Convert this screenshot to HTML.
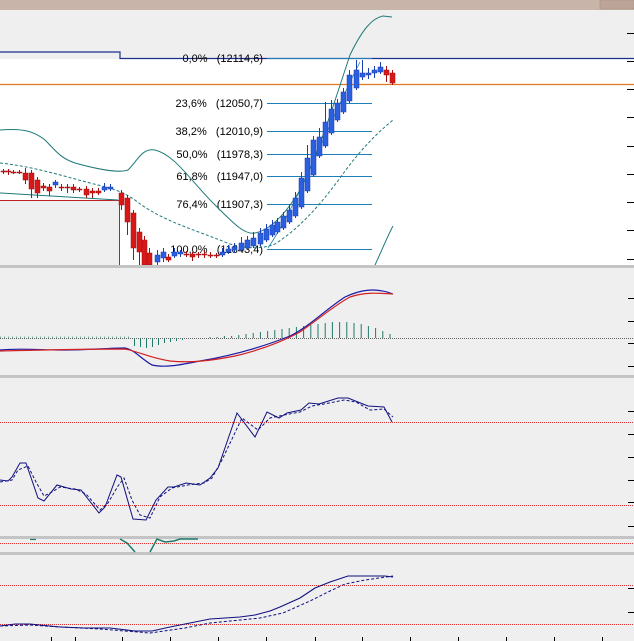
<!DOCTYPE html>
<html><head><meta charset="utf-8"><style>
html,body{margin:0;padding:0;width:634px;height:641px;overflow:hidden;background:#efefef}
svg{display:block}
text{font-family:"Liberation Sans",sans-serif;font-size:11px;fill:#000;white-space:pre}
</style></head><body>
<svg id="s" width="634" height="641" viewBox="0 0 634 641" xmlns="http://www.w3.org/2000/svg">
<rect x="0" y="0" width="634" height="10" fill="#c8b4a8"/>
<rect x="600" y="0" width="34" height="9" fill="#bca498" stroke="#a89084" stroke-width="0.6"/>
<rect x="0" y="10" width="634" height="255" fill="#efefef"/>
<rect x="0" y="59" width="634" height="206" fill="#ffffff"/>
<rect x="0" y="200" width="119" height="65" fill="#efefef"/>
<polyline points="0,200.5 119.5,200.5 119.5,265" fill="none" stroke="#c02020" stroke-width="1"/>
<polyline points="0,52 120,52 120,58.5 634,58.5" fill="none" stroke="#1c2f8c" stroke-width="1.2"/>
<line x1="0" y1="84.5" x2="634" y2="84.5" stroke="#e07820" stroke-width="1.3"/>
<g stroke="#1d7fb8" stroke-width="1">
<line x1="267" y1="58.5" x2="372" y2="58.5"/>
<line x1="267" y1="103.5" x2="372" y2="103.5"/>
<line x1="267" y1="131.5" x2="372" y2="131.5"/>
<line x1="267" y1="154.5" x2="372" y2="154.5"/>
<line x1="267" y1="176.5" x2="372" y2="176.5"/>
<line x1="267" y1="204.5" x2="372" y2="204.5"/>
<line x1="267" y1="249.5" x2="372" y2="249.5"/>
</g>
<g text-anchor="end">
<text x="263" y="62">0,0%   (12114,6)</text>
<text x="263" y="107">23,6%   (12050,7)</text>
<text x="263" y="135">38,2%   (12010,9)</text>
<text x="263" y="158">50,0%   (11978,3)</text>
<text x="263" y="180">61,8%   (11947,0)</text>
<text x="263" y="208">76,4%   (11907,3)</text>
<text x="263" y="253">100,0%   (11843,4)</text>
</g>
<path d="M0,130 C25,128 35,132 45,140 C55,150 60,158 75,163 C100,170 120,173 128,170 C138,160 142,148 155,150 C175,155 190,180 215,205 C235,225 245,235 255,233 C270,230 285,215 300,190 C320,150 335,100 350,55 C362,30 372,18 383,16 L392,17" fill="none" stroke="#1f7a7a" stroke-width="1"/>
<path d="M0,163 C30,166 60,175 90,183 C110,188 120,190 135,200 C160,220 190,228 230,244 C250,249 262,249 275,244 C300,228 320,205 340,178 C360,150 375,135 393,120" fill="none" stroke="#1f7a7a" stroke-width="1" stroke-dasharray="3,2"/>
<path d="M0,193 C40,195 80,198 118,200" fill="none" stroke="#1f7a7a" stroke-width="1"/>
<path d="M375,265 C382,250 388,235 393,226" fill="none" stroke="#1f7a7a" stroke-width="1"/>
<path d="M268,248 C300,200 330,120 360,62" fill="none" stroke="#1d7fb8" stroke-width="0.8"/>
<g id="candles"></g>
<g stroke="#000" stroke-width="1">
<line x1="627" y1="33.5" x2="634" y2="33.5"/><line x1="627" y1="61.5" x2="634" y2="61.5"/><line x1="627" y1="89.5" x2="634" y2="89.5"/><line x1="627" y1="117.5" x2="634" y2="117.5"/><line x1="627" y1="146.5" x2="634" y2="146.5"/><line x1="627" y1="174.5" x2="634" y2="174.5"/><line x1="627" y1="202.5" x2="634" y2="202.5"/><line x1="627" y1="230.5" x2="634" y2="230.5"/><line x1="627" y1="259.5" x2="634" y2="259.5"/>
</g>
<rect x="0" y="265" width="634" height="3" fill="#c4c4c4"/>
<rect x="0" y="375" width="634" height="3" fill="#c4c4c4"/>
<rect x="0" y="536" width="634" height="3" fill="#c4c4c4"/>
<rect x="0" y="552" width="634" height="3" fill="#c4c4c4"/>
<line x1="0" y1="338.5" x2="634" y2="338.5" stroke="#333" stroke-width="0.8" stroke-dasharray="1,1"/>
<g id="hist" stroke="#1f7a6a" stroke-width="1"></g>
<path d="M0,350 C20,348 40,350 60,350 C90,350 110,348 125,348 C135,350 140,358 152,365 C165,368 180,365 200,361 C230,356 260,348 290,336 C310,326 325,310 345,297 C360,290 375,287 393,294" fill="none" stroke="#1a1aa8" stroke-width="1.2"/>
<path d="M0,351 C40,350 100,349 125,349 C140,352 150,358 170,361 C190,363 210,361 235,356 C260,350 280,343 300,332 C320,318 335,305 350,297 C365,292 378,293 393,294" fill="none" stroke="#d42020" stroke-width="1.2"/>
<g stroke="#000"><line x1="628" y1="298.5" x2="634" y2="298.5"/><line x1="628" y1="321.5" x2="634" y2="321.5"/><line x1="628" y1="343.5" x2="634" y2="343.5"/><line x1="628" y1="366.5" x2="634" y2="366.5"/></g>
<line x1="0" y1="422.5" x2="634" y2="422.5" stroke="#e03030" stroke-width="1" stroke-dasharray="1,1"/>
<line x1="0" y1="505.5" x2="634" y2="505.5" stroke="#e03030" stroke-width="1" stroke-dasharray="1,1"/>
<polyline points="0,480 8,481 12,477 20,463 26,463 38,498 44,501 57,485 71,489 81,490 99,513 105,507 117,475 121,477 133,519 146,520 156,500 168,487 174,487 186,483 200,485 210,478 218,468 237,413 255,437 267,412 279,418 287,413 301,410 309,403 319,404 338,398 348,398 368,406 384,407 392,422" fill="none" stroke="#101080" stroke-width="1"/>
<polyline points="0,482 12,480 18,470 28,466 36,482 44,496 52,492 60,487 75,489 86,494 100,510 108,503 118,486 124,478 132,500 140,515 150,518 160,497 172,488 188,485 204,483 212,478 222,460 242,418 258,430 270,418 284,415 300,412 312,406 324,404 344,400 356,402 370,410 384,409 393,417" fill="none" stroke="#101080" stroke-width="1" stroke-dasharray="3,2"/>
<g stroke="#000"><line x1="628" y1="411.5" x2="634" y2="411.5"/><line x1="628" y1="434.5" x2="634" y2="434.5"/><line x1="628" y1="457.5" x2="634" y2="457.5"/><line x1="628" y1="480.5" x2="634" y2="480.5"/><line x1="628" y1="502.5" x2="634" y2="502.5"/><line x1="628" y1="526.5" x2="634" y2="526.5"/></g>
<line x1="0" y1="543.5" x2="634" y2="543.5" stroke="#e03030" stroke-width="1" stroke-dasharray="1,1"/>
<polyline points="120,539 127,543 135,552" fill="none" stroke="#1f7a6a" stroke-width="1.5"/>
<polyline points="150,552 157,539 165,542 174,541 180,539 198,539" fill="none" stroke="#1f7a6a" stroke-width="1.5"/>
<line x1="30" y1="539.5" x2="36" y2="539.5" stroke="#1f7a6a" stroke-width="1.2"/>
<line x1="0" y1="585.5" x2="634" y2="585.5" stroke="#e03030" stroke-width="1" stroke-dasharray="1,1"/>
<line x1="0" y1="624.5" x2="634" y2="624.5" stroke="#e03030" stroke-width="1" stroke-dasharray="1,1"/>
<polyline points="0,626 15,624 30,624 60,627 85,628 110,628 135,631 152,631 170,627 190,623 210,619 240,617 255,615 270,611 280,607 300,598 315,588 330,582 348,576 385,576 393,577" fill="none" stroke="#101080" stroke-width="1.1"/>
<polyline points="0,626 30,625 60,627 100,629 150,633 185,628 210,623 240,620 260,618 283,613 310,601 330,591 345,584 365,580 393,576" fill="none" stroke="#101080" stroke-width="1" stroke-dasharray="3,2"/>
<g stroke="#000"><line x1="628" y1="588.5" x2="634" y2="588.5"/><line x1="628" y1="612.5" x2="634" y2="612.5"/></g>
<g stroke="#000" id="xt"></g>
</svg>
<script>
var NS="http://www.w3.org/2000/svg";
function el(p,t,a){var e=document.createElementNS(NS,t);for(var k in a)e.setAttribute(k,a[k]);p.appendChild(e);return e;}
var g=document.getElementById('candles');
var C=[
[3,171,171,169,174],[8,171,172,169,175],[13,172,172,170,174],[19,172,172,170,174],[25,173,180,168,184],[31,173,189,170,198],[37,180,193,177,198],[43,186,188,183,191],[49,187,191,184,196],[55,185,182,180,188],[61,187,188,184,191],[67,187,188,184,193],[73,187,190,184,193],[79,189,190,187,192],[86,189,195,186,198],[92,191,193,188,198],[98,191,193,188,195],[104,190,187,183,192],[110,189,187,184,191],
[121,193,205,190,210],[127,198,222,195,235],[133,213,248,210,260],[139,232,252,228,265],[144,240,265,236,265],[149,253,265,248,265],
[157,262,255,250,265],[163,258,252,248,262],[168,257,260,254,262],[174,256,252,248,258],[180,254,252,250,257],[186,254,255,251,257],[192,254,257,252,261],[198,254,255,252,258],[204,254,254,250,258],[210,255,256,252,258],[216,255,256,253,258],[222,255,252,248,257],[228,252,249,245,254],[234,250,247,243,253],
[241,250,243,237,252],[247,248,240,236,250],[253,246,238,232,248],[260,244,233,228,246],[266,240,229,224,242],[272,235,225,220,237],[277,232,222,218,234],[283,228,216,212,230],[289,222,210,204,224],[295,216,198,192,218],[301,207,178,172,209],[307,191,158,145,193],[313,175,140,136,177],[319,156,137,128,158],[325,146,122,102,148],[331,133,109,100,135],[337,120,103,99,122],[343,112,92,88,114],[349,101,75,70,103],[356,88,70,60,90],[362,77,73,60,80],[368,75,73,68,79],[374,73,70,66,78],[380,72,67,62,74],[386,70,75,66,82],[392,73,83,70,85]
];
C.forEach(function(c){var up=c[2]<c[1];var col=up?"#2a5fe0":"#d81818";var sc=up?"#1a3fb0":"#a01010";
el(g,'line',{x1:c[0]+0.5,x2:c[0]+0.5,y1:c[3],y2:c[4],stroke:sc,'stroke-width':1});
var t=Math.min(c[1],c[2]),h=Math.max(1,Math.abs(c[1]-c[2]));
el(g,'rect',{x:c[0]-2,y:t,width:5,height:h,fill:col,stroke:sc,'stroke-width':0.5});});
var hg=document.getElementById('hist');
var H=[[134,346],[140,347],[146,348],[152,347],[158,345],[164,343],[170,342],[176,341],[182,340]];
H.forEach(function(h){el(hg,'line',{x1:h[0]+.5,x2:h[0]+.5,y1:338,y2:h[1]});});
for(var x=0;x<130;x+=4)el(hg,'line',{x1:x+.5,x2:x+.5,y1:338,y2:336.5,'stroke-width':0.6});
var hv=[337,337,336,336,335,334,333,332,331,330,329,328,327,326,325,324,323,322,322,322,323,324,326,328,331,334];
for(var i=0;i<hv.length;i++){var x=210+i*7.2;el(hg,'line',{x1:x,x2:x,y1:338,y2:hv[i]});}
var xt=document.getElementById('xt');
[51,75,122,170,218,266,315,362,410,458,506,554,602].forEach(function(x){el(xt,'line',{x1:x+.5,x2:x+.5,y1:637,y2:641});});
</script>
</body></html>
